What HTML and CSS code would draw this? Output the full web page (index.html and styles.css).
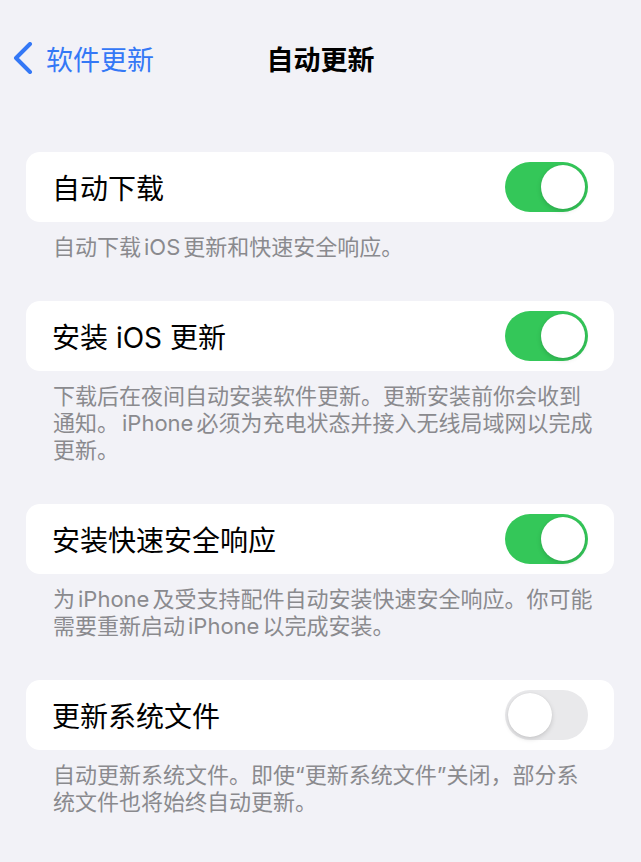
FILE: index.html
```html
<!DOCTYPE html>
<html>
	<head>
		<meta charset="utf-8">
		<link rel="stylesheet" href="styles.css">
	</head>
	<body>
		<div class="nav">
			<a class="back" href="#">
				<svg class="chevron" width="20" height="32" viewBox="0 0 20 32">
					<path d="M17 2 L3 16 L17 30" fill="none" stroke="#3478f6" stroke-width="4" stroke-linecap="round" stroke-linejoin="round"/>
				</svg>
				<span>软件更新</span>
			</a>
			<h1 class="title">自动更新</h1>
			<div></div>
		</div>

		<div class="list">
			<div class="group">
				<div class="cell">
					<span class="label">自动下载</span>
					<span class="switch on"></span>
				</div>
				<p class="footer">自动下载<span class="latin">iOS</span>更新和快速安全响应。</p>
			</div>

			<div class="group">
				<div class="cell">
					<span class="label">安装 iOS 更新</span>
					<span class="switch on"></span>
				</div>
				<p class="footer">下载后在夜间自动安装软件更新。更新安装前你会收到<br>通知。<span class="latin">iPhone</span>必须为充电状态并接入无线局域网以完成<br>更新。</p>
			</div>

			<div class="group">
				<div class="cell">
					<span class="label">安装快速安全响应</span>
					<span class="switch on"></span>
				</div>
				<p class="footer">为<span class="latin">iPhone</span>及受支持配件自动安装快速安全响应。你可能<br>需要重新启动<span class="latin">iPhone</span>以完成安装。</p>
			</div>

			<div class="group">
				<div class="cell">
					<span class="label">更新系统文件</span>
					<span class="switch"></span>
				</div>
				<p class="footer">自动更新系统文件。即使“更新系统文件”关闭，部分系<br>统文件也将始终自动更新。</p>
			</div>
		</div>
	</body>
</html>
```

FILE: styles.css
```css
body {
	margin: 0;
	background: #f2f2f7;
	font-family: Inter, "Noto Sans CJK SC", sans-serif;
	color: #000;
}
.nav {
	display: grid;
	grid-template-columns: 1fr auto 1fr;
	align-items: center;
	height: 60px;
	margin-top: 28px;
}
.back {
	display: flex;
	align-items: center;
	gap: 13px;
	padding-left: 13px;
	color: #3478f6;
	font-size: 27px;
	text-decoration: none;
}
.chevron {
	display: block;
}
.title {
	margin: 0;
	font-size: 27px;
	font-weight: 600;
}
.list {
	margin-top: 64px;
	padding: 0 27px 0 26px;
}
.group {
	margin-bottom: 40px;
}
.cell {
	display: flex;
	align-items: center;
	justify-content: space-between;
	height: 70px;
	padding: 0 26px 0 26px;
	background: #fff;
	border-radius: 14px;
}
.label {
	font-size: 28px;
}
.footer {
	margin: 0;
	padding: 12px 20px 0 27px;
	font-size: 22px;
	line-height: 27px;
	color: #8a8a8e;
	white-space: nowrap;
}
.latin {
	margin: 0 3px;
}
.switch {
	position: relative;
	width: 83px;
	height: 50px;
	border-radius: 25px;
	background: #e9e9eb;
}
.switch::after {
	content: "";
	position: absolute;
	top: 3px;
	left: 3px;
	width: 44px;
	height: 44px;
	border-radius: 50%;
	background: #fff;
	box-shadow: 0 2px 5px rgba(0, 0, 0, 0.15), 0 0 1px rgba(0, 0, 0, 0.1);
}
.switch.on {
	background: #34c759;
}
.switch.on::after {
	left: 36px;
}
```
